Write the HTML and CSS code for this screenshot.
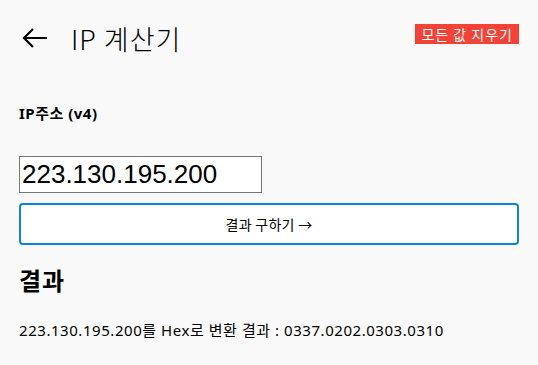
FILE: index.html
```html
<!DOCTYPE html>
<html>
<head>
    <title>IP 계산기</title>
    <link rel="stylesheet" href="styles.css">
</head>
<body>
    <div class="page">
        <div class="header">
            <div class="back">
                <svg width="26" height="20" viewBox="0 0 26 20">
                    <path d="M2 10 H25 M11 1 L2 10 L11 19" fill="none" stroke="#000" stroke-width="2.2"/>
                </svg>
            </div>
            <h1>IP 계산기</h1>
            <button class="clear-btn">모든 값 지우기</button>
        </div>

        <label class="field-label">IP주소 (v4)</label>
        <input class="ip-input" type="text" value="223.130.195.200">
        <button class="calc-btn">결과 구하기 →</button>

        <h2>결과</h2>
        <p class="result">223.130.195.200를 Hex로 변환 결과 : 0337.0202.0303.0310</p>
    </div>
</body>
</html>
```

FILE: styles.css
```css
/* 기본 */
body {
    margin: 0;
    background-color: #f9f9f9;
    font-family: "Noto Sans", "Noto Sans CJK KR", sans-serif;
    color: #000;
}
.page {
    padding: 0 19px;
}

/* 상단 헤더 */
.header {
    display: flex;
    align-items: center;
    height: 76px;
}
.back {
    display: flex;
    width: 26px;
    margin-left: 3px;
    margin-right: 23px;
}
h1 {
    flex: 1;
    margin: 0;
    font-size: 27px;
    font-weight: 300;
    letter-spacing: 1px;
    font-family: "Noto Sans CJK KR", sans-serif;
}
.clear-btn {
    align-self: flex-start;
    margin-top: 24px;
    margin-right: 0;
    background: #f44336;
    color: #fff;
    border: none;
    height: 20px;
    padding: 0 6px;
    font-size: 14px;
    letter-spacing: 1px;
    font-family: "Noto Sans CJK KR", sans-serif;
}

/* 입력 */
.field-label {
    display: block;
    margin-top: 26px;
    font-size: 15px;
    font-weight: bold;
    letter-spacing: 0.5px;
}
.ip-input {
    display: block;
    margin-top: 33px;
    width: 243px;
    height: 37px;
    box-sizing: border-box;
    border: 1px solid #767676;
    padding: 0 2px;
    font-family: "Liberation Sans", Arial, sans-serif;
    font-size: 26px;
    background: #fff;
}
.calc-btn {
    display: block;
    width: 100%;
    height: 42px;
    margin-top: 10px;
    background: #fff;
    border: 2px solid #0a84e0;
    border-radius: 4px;
    font-size: 14px;
    letter-spacing: 0.3px;
    font-family: "Noto Sans CJK KR", sans-serif;
    color: #000;
}

/* 결과 */
h2 {
    margin: 17px 0 0;
    font-size: 24px;
    font-weight: bold;
    letter-spacing: 1px;
}
.result {
    margin: 22px 0 0;
    font-size: 15px;
    letter-spacing: 0.55px;
}
```
